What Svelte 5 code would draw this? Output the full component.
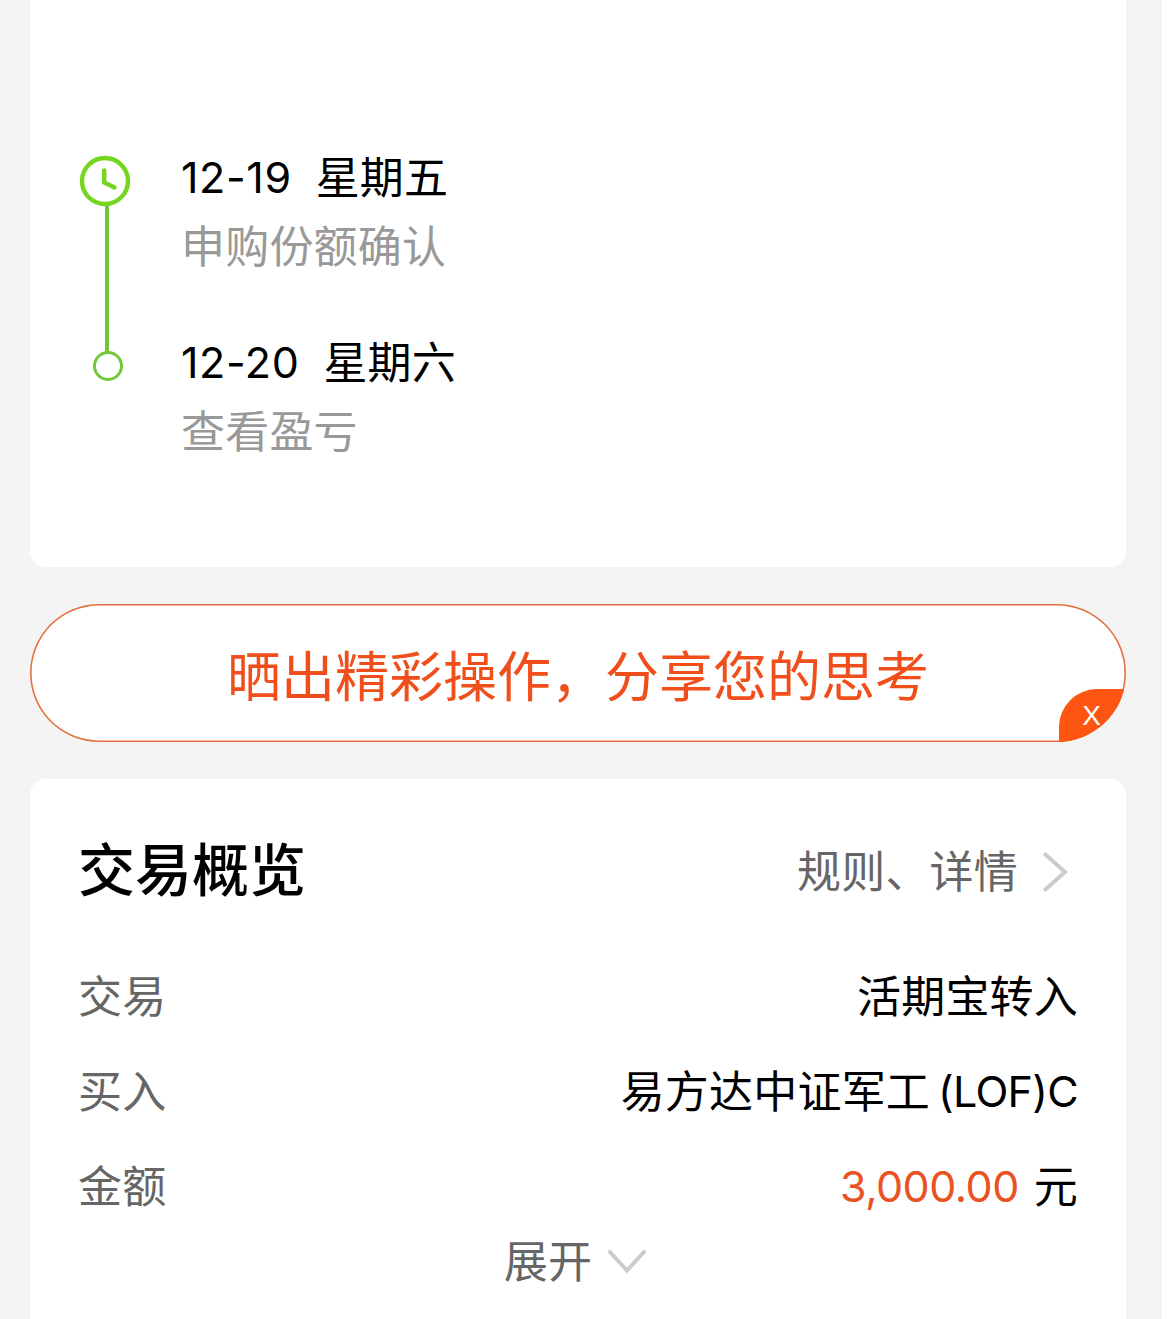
<script>
  const steps = [
    { date: '12-19', weekday: '星期五', text: '申购份额确认', current: true },
    { date: '12-20', weekday: '星期六', text: '查看盈亏', current: false }
  ];

  const rows = [
    { label: '交易', value: '活期宝转入' },
    { label: '买入', value: '易方达中证军工', suffix: '(LOF)C' },
    { label: '金额', amount: '3,000.00', value: '元' }
  ];

  let showBanner = $state(true);
</script>

<main class="page">
  <section class="card timeline">
    {#each steps as step}
      <div class="step">
        <div class="marker">
          {#if step.current}
            <svg class="clock" width="52" height="52" viewBox="0 0 52 52" fill="none" stroke="#76d51f">
              <circle cx="26" cy="26" r="23" stroke-width="4.4" />
              <path d="M25.2 15.5V27.5L35.5 32.5" stroke-width="4.4" stroke-linecap="round" stroke-linejoin="round" />
            </svg>
            <span class="line"></span>
          {:else}
            <span class="dot"></span>
          {/if}
        </div>
        <div class="info">
          <div class="date"><span class="day">{step.date}</span><span class="weekday">{step.weekday}</span></div>
          <div class="desc">{step.text}</div>
        </div>
      </div>
    {/each}
  </section>

  {#if showBanner}
    <section class="banner">
      <span class="slogan">晒出精彩操作，分享您的思考</span>
      <button class="close" onclick={() => (showBanner = false)}>X</button>
    </section>
  {/if}

  <section class="card overview">
    <header class="head">
      <h2>交易概览</h2>
      <div class="more">
        <span>规则、详情</span>
        <svg width="26" height="42" viewBox="0 0 26 42" fill="none" stroke="#cbcbcb" stroke-width="4">
          <path d="M2 2.2L23 21L2 39.8" />
        </svg>
      </div>
    </header>

    {#each rows as row}
      <div class="row">
        <span class="label">{row.label}</span>
        <span class="value">
          {#if row.amount}<span class="amount">{row.amount}</span>{/if}<span class="name">{row.value}</span>{#if row.suffix}<span class="suffix">{row.suffix}</span>{/if}
        </span>
      </div>
    {/each}

    <div class="expand">
      <span>展开</span>
      <svg width="38" height="24" viewBox="0 0 38 24" fill="none" stroke="#cbcbcb" stroke-width="4">
        <path d="M2 2L19 20.5L36 2" stroke-linecap="round" />
      </svg>
    </div>
  </section>
</main>

<style>
  :global(body) {
    margin: 0;
    background: #fff;
  }

  .page {
    box-sizing: border-box;
    width: 1162px;
    height: 1319px;
    padding: 0 36px 0 30px;
    background: #f4f4f4;
    color: #000;
    font-family: Inter, 'Noto Sans CJK SC', sans-serif;
    font-size: 43px;
    line-height: 60px;
    overflow: hidden;
    display: flex;
    flex-direction: column;
  }

  .card {
    box-sizing: border-box;
    background: #fff;
    flex-shrink: 0;
  }

  .timeline {
    height: 567px;
    padding: 148px 48px 0 49px;
    border-radius: 0 0 16px 16px;
  }

  .step {
    display: flex;
    height: 185px;
  }

  .marker {
    width: 56px;
    margin-right: 46px;
    padding-top: 7px;
    display: flex;
    flex-direction: column;
    align-items: center;
  }

  .clock {
    display: block;
    flex-shrink: 0;
    margin-right: 4px;
  }

  .line {
    width: 4px;
    height: 146px;
    flex-shrink: 0;
    margin-top: -1px;
    background: #77c33c;
  }

  .dot {
    box-sizing: border-box;
    width: 30px;
    height: 30px;
    margin-top: 11px;
    margin-left: 1px;
    border: 3px solid #74c93a;
    border-radius: 50%;
  }

  .date {
    display: flex;
    gap: 24px;
  }

  .day {
    margin-top: -1px;
    letter-spacing: 0.6px;
  }

  .weekday,
  .desc,
  .label,
  .name,
  .more span,
  .expand span {
    font-size: 44px;
    letter-spacing: 0.2px;
  }

  .desc {
    margin-top: 9px;
    color: #999;
  }

  .banner {
    position: relative;
    height: 138px;
    margin: 37px 0;
    flex-shrink: 0;
    border-radius: 69px;
    background: #fff;
    box-shadow: inset 0 0 0 1.6px #e3703f;
    display: flex;
    align-items: center;
    justify-content: center;
    overflow: hidden;
  }

  .slogan {
    padding-top: 9px;
    color: #f04f1b;
    font-size: 54px;
    line-height: 80px;
  }

  .close {
    position: absolute;
    right: 0;
    bottom: 0;
    width: 67px;
    height: 53px;
    padding: 0 2px 0 0;
    border: none;
    border-radius: 38px 0 0 0;
    background: #ff5512;
    color: #fff;
    font-family: 'Liberation Sans', sans-serif;
    font-size: 28px;
    cursor: pointer;
  }

  .overview {
    height: 560px;
    padding: 50px 48px 0;
    border-radius: 16px 16px 0 0;
  }

  .head {
    display: flex;
    align-items: center;
    justify-content: space-between;
    height: 84px;
    margin-bottom: 54px;
  }

  h2 {
    margin: 0;
    font-size: 57px;
    font-weight: 500;
    line-height: 80px;
  }

  .more {
    display: flex;
    align-items: center;
    gap: 24px;
    padding: 2px 10px 0 0;
    color: #666;
  }

  .row {
    display: flex;
    justify-content: space-between;
    height: 95px;
  }

  .label,
  .expand {
    color: #666;
  }

  .value {
    display: flex;
  }

  .amount {
    margin: -1px 15px 0 0;
    color: #ea5222;
    letter-spacing: -0.5px;
  }

  .suffix {
    margin: -1px 0 0 8px;
    letter-spacing: -0.7px;
  }

  .expand {
    display: flex;
    align-items: center;
    justify-content: center;
    gap: 16px;
    margin-top: -20px;
    padding-right: 6px;
  }
</style>
